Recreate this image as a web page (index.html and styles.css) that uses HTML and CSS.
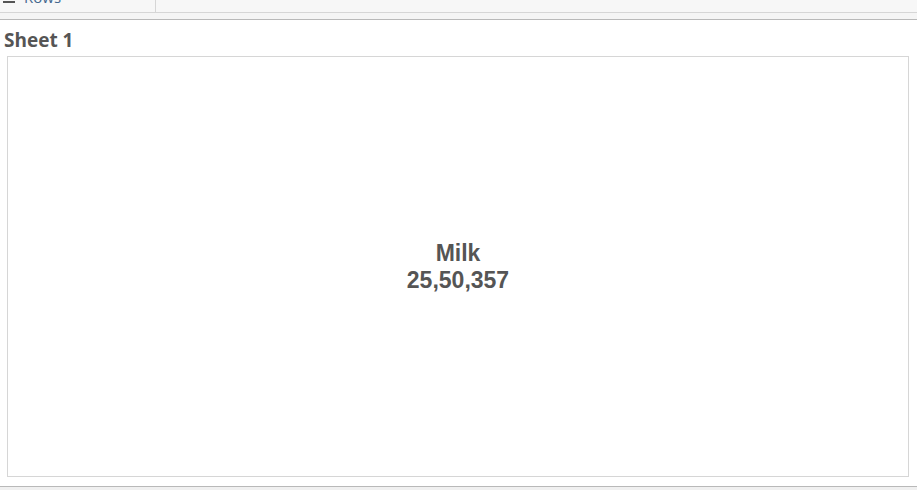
FILE: index.html
```html
<!DOCTYPE html>
<html>
<head>
<meta charset="utf-8">
<link rel="stylesheet" href="styles.css">
</head>
<body>
<div class="shelf">
  <div class="shelf-label">
    <span class="shelf-icon"><span></span><span></span></span>
    <span class="shelf-text">Rows</span>
  </div>
  <div class="shelf-drop"></div>
</div>
<div class="shelf-gap"></div>
<main class="sheet">
  <h1 class="sheet-title">Sheet 1</h1>
  <div class="viz">
    <div class="mark">
      <div class="mark-name">Milk</div>
      <div class="mark-value">25,50,357</div>
    </div>
  </div>
</main>
<div class="footer"></div>
</body>
</html>
```
FILE: styles.css
```css
html, body {
  margin: 0;
  padding: 0;
  width: 917px;
  height: 490px;
  overflow: hidden;
  background: #ffffff;
}
.shelf {
  display: flex;
  height: 12px;
  background: #f7f7f7;
  border-bottom: 1px solid #d6d6d6;
  overflow: hidden;
}
.shelf-label {
  width: 155px;
  border-right: 1px solid #d6d6d6;
  display: flex;
  align-items: flex-end;
  position: relative;
}
.shelf-icon {
  position: absolute;
  left: 3px;
  top: -3px;
  width: 12px;
  display: flex;
  flex-direction: column;
  gap: 2px;
}
.shelf-icon span {
  display: block;
  height: 2px;
  background: #555;
}
.shelf-text {
  position: absolute;
  left: 24px;
  top: -11px;
  font-family: "Open Sans", sans-serif;
  font-size: 15px;
  line-height: 16px;
  color: #46698f;
}
.shelf-drop {
  flex: 1;
}
.shelf-gap {
  height: 6px;
  background: #f5f5f5;
  border-bottom: 1px solid #b9b9b9;
}
.sheet {
  height: 466px;
  box-sizing: border-box;
  padding: 0 8px 0 7px;
  display: flex;
  flex-direction: column;
}
.sheet-title {
  margin: 8px 0 0 -3px;
  height: 28px;
  font-family: "Open Sans", sans-serif;
  font-weight: 700;
  font-size: 19px;
  line-height: 24px;
  color: #555555;
}
.viz {
  height: 421px;
  box-sizing: border-box;
  border: 1px solid #d6d6d6;
  display: flex;
  align-items: center;
  justify-content: center;
}
.mark {
  text-align: center;
  font-family: "Liberation Sans", Arial, sans-serif;
  font-weight: 700;
  font-size: 23px;
  line-height: 27px;
  color: #555555;
}
.footer {
  height: 4px;
  border-top: 1px solid #b9b9b9;
  background: #f0f0f0;
}
```
